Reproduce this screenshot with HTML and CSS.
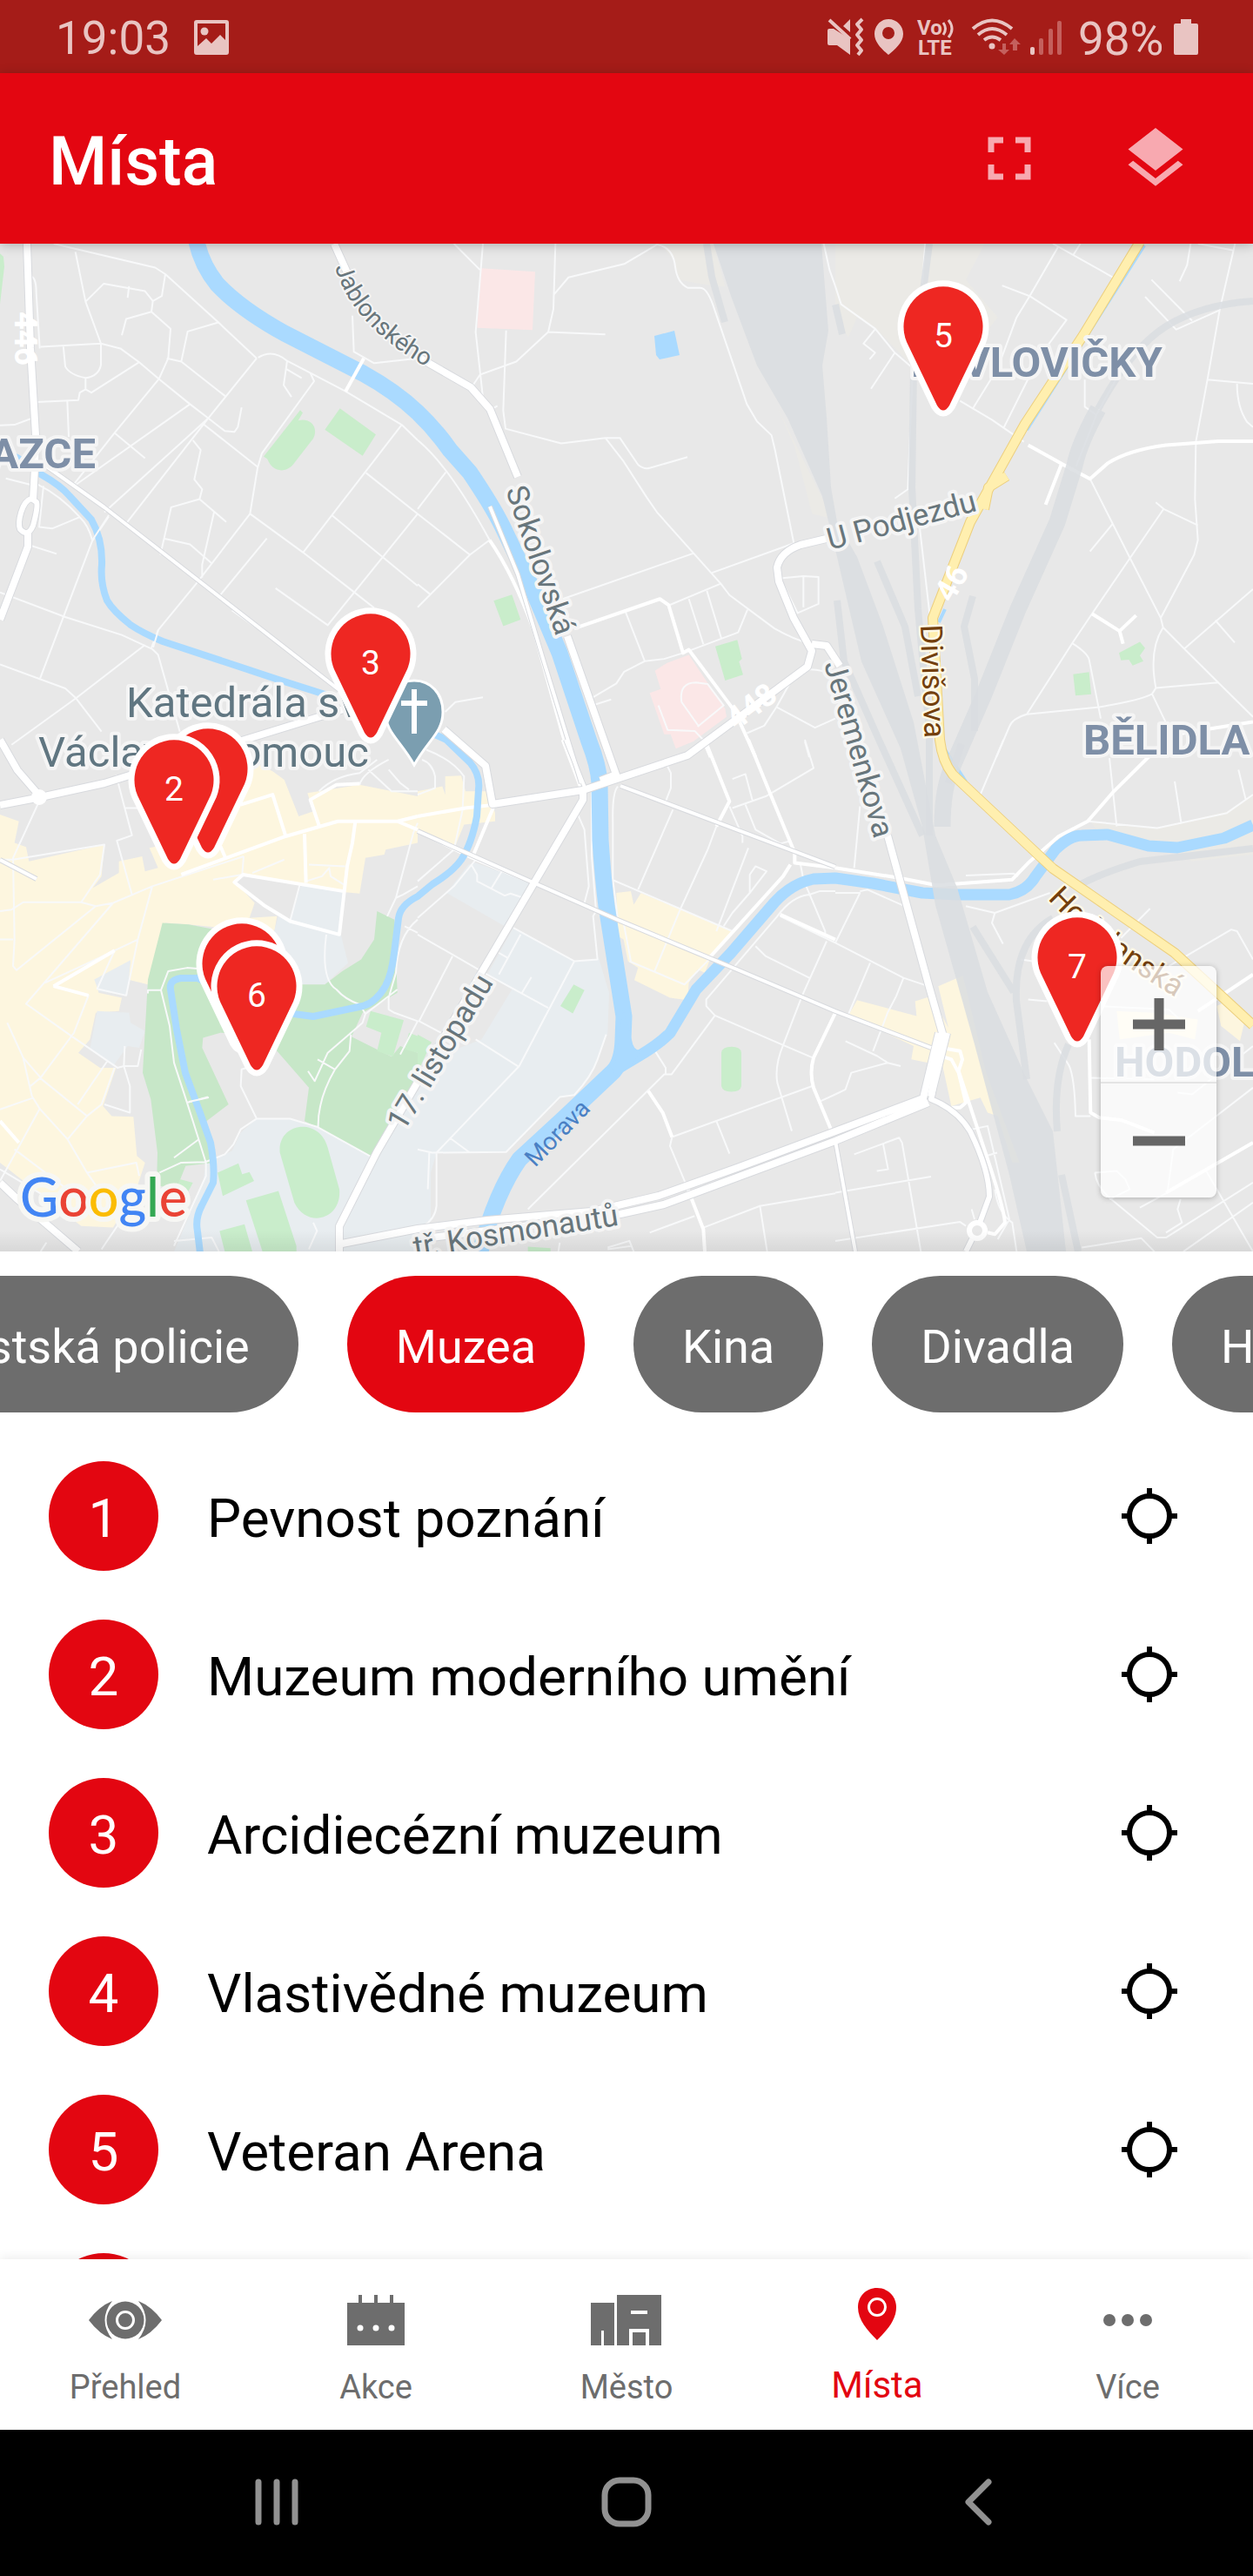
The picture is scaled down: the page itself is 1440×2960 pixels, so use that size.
FILE: index.html
```html
<!DOCTYPE html>
<html lang="cs">
<head>
<meta charset="utf-8">
<meta name="viewport" content="width=device-width, initial-scale=1">
<title>Místa</title>
<link rel="stylesheet" href="styles.css">
</head>
<body>
<div class="status">
  <div class="status-side">
    <span class="status-text">19:03</span>
    <svg class="status-image" viewBox="0 0 42 42" width="42" height="42" fill="currentColor"><path fill-rule="evenodd" d="M4 1H38Q41 1 41 4V38Q41 41 38 41H4Q1 41 1 38V4Q1 1 4 1ZM5 5V31L15 22L21 28L31 18L37 24V5Z"/><circle cx="13" cy="14" r="4.500"/></svg>
  </div>
  <svg class="status-icons" viewBox="946 18 434 50" width="434" height="50" fill="currentColor">
    <path d="M951 35Q951 33 953 33H958L977 45V63L962 52H953Q951 52 951 50ZM969 30L977 22V37Z"/>
    <path d="M953 23L977 45" fill="none" stroke="currentColor" stroke-width="4"/>
    <path d="M991 22L985 28L990 34L985 40L990 46L985 52L990 58L986 63" fill="none" stroke="currentColor" stroke-width="4" stroke-linejoin="round"/>
    <path fill-rule="evenodd" d="M1021 22C1031 22 1038 30 1038 39C1038 49 1028 57 1021 63C1014 57 1005 49 1005 39C1005 30 1012 22 1021 22ZM1021 31A7 7 0 1 0 1021 45A7 7 0 1 0 1021 31Z"/>
    <text class="volte" x="1054" y="40">Vo</text><text class="volte" x="1055" y="63">LTE</text>
    <path d="M1084 26Q1089 33 1084 40M1090 23Q1098 33 1090 43" fill="none" stroke="currentColor" stroke-width="3"/>
    <path d="M1118 33Q1140 14 1163 33M1124 40Q1140 26 1157 40M1131 46Q1140 39 1150 46" fill="none" stroke="currentColor" stroke-width="4"/><circle cx="1140" cy="53" r="3.500"/>
    <path class="dim" d="M1152 50H1156V57H1160L1154 63L1147 57H1152ZM1164 58V51H1160L1166 44L1173 51H1169V58Z"/>
    <rect x="1184" y="54" width="5" height="9" rx="2"/>
    <g class="dim"><rect x="1194" y="44" width="5" height="19" rx="2"/><rect x="1205" y="33" width="5" height="30" rx="2"/><rect x="1215" y="24" width="5" height="39" rx="2"/></g>
    <text class="percent" x="1239" y="63">98%</text>
    <path d="M1357 27V22H1369V27H1375Q1377 27 1377 29V61Q1377 63 1375 63H1351Q1349 63 1349 61V29Q1349 27 1351 27Z"/>
  </svg>
</div>

<header class="appbar">
  <h1>Místa</h1>
  <button class="appbar-btn" aria-label="Celá obrazovka"><svg viewBox="0 0 24 24"><path d="M7 14H5v5h5v-2H7v-3zm-2-4h2V7h3V5H5v5zm12 7h-3v2h5v-5h-2v3zM14 5v2h3v3h2V5h-5z"/></svg></button>
  <button class="appbar-btn" aria-label="Vrstvy"><svg viewBox="0 0 24 24"><path d="M11.990 18.540l-7.370-5.730L3 14.070l9 7 9-7-1.630-1.270-7.380 5.740zM12 16l7.360-5.730L21 9l-9-7-9 7 1.630 1.270L12 16z"/></svg></button>
</header>

<main>
<section class="map" aria-label="Mapa">
<svg class="map-canvas" viewBox="0 280 1440 1158" role="img" aria-label="Mapa Olomouce">
  <defs>
    <g id="main-roads">
      <path class="w6" d="M31 280L35 400L41 500L40 538L38 574M32 612V628L0 712"/>
      <path class="w5" d="M36 573C25 576 20 600 23 608Q32 618 38 604Q44 582 42 577Z"/>
      <path class="w3" d="M48 532L120 583L390 793"/>
      <path class="w7" d="M384 280L402 320M480 410L541 445L563 470L595 548M652 731L708 890L690 897"/>
      <path class="w7" d="M0 925L42 917L120 900L200 875L395 815M0 850L20 885L45 914"/>
      <path class="w7" d="M510 838L558 880L566 924L670 908L790 868L928 766L933 748L912 710L895 668L893 652Q897 634 920 626L958 617"/>
      <path class="w7" d="M933 740L950 742L965 765M1020 960L1067 1131L1083 1187L1070 1260M670 908V919L553 1118L433 1324L390 1409V1438"/>
      <path class="w3" d="M0 988L42 1010M650 850L672 905M713 903L960 996M480 955L617 1016L710 1057L847 1114L960 1162L1070 1204"/>
      <path class="w3" d="M563 582L595 660L625 760L668 900"/>
    </g>
    <g id="avenues">
      <path class="w7" d="M1079 1187L1061 1262L960 1300L847 1342L757 1374L680 1392L560 1402L480 1412L388 1430M480 1424L713 1395L763 1384L960 1311L1067 1267"/>
      <path class="w5" d="M1089 1187L1070 1263Q1100 1275 1115 1300Q1137 1345 1137 1375L1126 1405M1117 1424L1110 1438"/>
      <path class="w7" d="M0 1359L20 1378L90 1438"/>
      <path class="w3" d="M960 1311L983 1438"/>
    </g>
  </defs>
  <rect class="land" y="280" width="1440" height="1158"/>

  <g class="beige">
    <g class="tile-b"><path d="M835 0H1020L1060 130L990 125L900 110L885 50ZM1240 500L1430 840L1360 825L1300 620Z"/></g>
    <g class="tile-c"><path d="M0 0H515L450 110L560 225L510 280L250 360L135 255L75 225L45 285L0 230Z"/></g>
    <g class="tile-f"><path d="M880 245L1110 265L1350 215L1440 165V345L1230 365L1180 335L900 270Z"/></g>
  </g>
  <g class="cream">
    <g class="tile-d"><path d="M0 225L65 245L50 310L90 322L100 365L360 315L350 410L320 445L410 400V365L490 350L500 395L545 385L515 325L600 310L860 60L940 95L980 120L1030 230L1080 215L1060 160L1240 135L1440 170V310L1330 330L1325 345L1260 355L1240 462L1190 458L838 405L808 425L878 490L860 535L955 530L945 580L830 570L650 555L570 550L510 735L440 720L450 665L330 720L340 760L420 775L410 815L330 820L310 900L270 940L345 985L400 985L355 1100L385 1130L460 1132L472 1250L500 1270L470 1350L390 1465L280 1460L0 1270Z"/></g>
    <g class="tile-e"><path d="M0 155L85 140L95 165V110L150 108L165 155H245L267 220V245L160 255L130 318L0 270ZM685 460L735 455L745 495L770 460L1085 575L1010 655L990 700L965 690L935 730L930 782L870 775L747 722L760 685L725 665L710 600L690 590Z"/></g>
    <g class="tile-f"><path d="M75 782L280 830L275 785L330 770L390 865L370 960L345 975L262 960L270 920L45 828ZM355 740L440 708L520 1000L635 1270H610L560 1130L525 1120L500 1075L400 1100L365 960L390 865ZM970 815L1100 820L1250 840L1240 900L1150 880L980 900ZM1315 800L1360 780L1410 850L1395 905L1330 860Z"/></g>
  </g>
  <g class="campus">
    <g class="tile-d"><path d="M1040 432L1185 458L1175 585L1200 670L1120 735H1030L940 590L960 530L1000 545ZM335 815L445 820L450 850L500 875L480 925L440 920L390 980L310 930ZM325 720L450 662L440 768L340 755ZM830 1180L885 1138L1000 1140L1095 1165L1285 1255L1440 1030V1537H600L700 1330L710 1270L800 1235Z"/></g>
    <g class="tile-e"><path d="M0 1060L40 960L220 900L325 750L240 705L330 565L540 665L625 658L660 760L655 880L610 985L540 1068L490 1075L305 1238L65 1240L45 1300V1440L0 1470ZM175 375L200 370L410 435L365 480L300 560L100 460Z"/></g>
  </g>
  <g class="park"><g class="tile-d">
    <path d="M560 550L650 555L740 570L760 880L700 895L697 925L788 1095L712 1145L738 1270L640 1280L610 1345L540 1340L543 1240L520 1080L492 1000L510 720Z"/>
    <path d="M740 570L960 640L1030 735H1120L1180 695L1245 660L1290 600L1300 515L1360 540L1370 760L1250 820L1212 892L1350 952L1380 920L1440 940V1030L1285 1255L1095 1165L1050 1145L1065 1045L950 930L870 885L760 880Z"/>
  </g></g>
  <g class="green">
    <g class="tile-a"><path d="M0 30L12 40L15 70L0 185ZM909 650L1035 508L1044 516L1028 540C1070 530 1100 560 1080 595L1010 675C985 700 940 700 922 658ZM1172 503L1296 583L1250 648L1120 568Z"/></g>
    <g class="tile-b"><path d="M262 1090L325 1072L355 1148L295 1168ZM1026 1230L1102 1210L1118 1268L1108 1276L1122 1316L1060 1334Z"/></g>
    <g class="tile-c"><path d="M978 1250L1050 1216L1068 1235L1050 1258L1062 1275L1025 1288L1012 1270L985 1272ZM820 1315L875 1308L882 1376L828 1380Z"/></g>
    <g class="tile-d"><path d="M1278 815L1392 842L1355 952L1300 935L1315 880L1262 862ZM1410 880L1440 890V940L1395 930ZM750 1300L822 1272L835 1305L860 1298L876 1325L768 1370ZM848 1383L960 1355L1022 1520V1537H905ZM757 1475L843 1455L870 1537H775ZM965 1240C955 1150 1100 1130 1130 1225L1170 1350C1180 1440 1060 1470 1015 1390ZM620 1320L665 1330L650 1355L610 1350Z"/></g>
    <g class="tile-e"><path d="M538 735L575 752L535 822L492 800ZM0 885L48 908L10 980L0 975ZM380 1522L458 1527V1537H380Z"/><path d="M1047 940Q1050 922 1082 922T1116 940V1040Q1113 1057 1082 1057T1047 1040Z"/></g>
  </g>
  <g class="pink"><g class="tile-b"><path d="M219 75L405 86L396 264L205 257ZM818 1304L860 1280L935 1256L1060 1420L1065 1445L950 1520L890 1542L872 1498H850L800 1372L838 1360Z"/></g></g>

  <g class="minor">
    <g class="tile-a">
      <path class="s2" d="M185 0L535 73L570 93L750 238L885 350M570 93L558 160L527 175L522 208L588 260L580 350L548 413M348 305L140 315M527 175L500 145L358 122L295 177L260 25M295 177L348 305V370Q340 405 295 410Q240 400 225 375L218 310M295 410V445L275 455L270 478L125 484M295 445L315 455L480 362M348 305L415 320L480 362L548 413L655 490L718 533L775 572L808 575L820 560L833 500M655 490L255 740M548 413L395 578L250 740M718 533L360 820M885 350L718 533L430 860M890 348Q940 320 990 358L1190 450L1385 553L1440 600"/>
      <path class="s2" d="M1190 450L1255 350M1215 220L1220 330L1290 365L1440 350M1070 395L1083 420L903 640L888 685L862 825L1045 943L1215 1060L1290 1112M700 550L890 683M862 825L675 1040L545 1180L522 1235M755 240L647 268L625 360L575 350M625 360L780 468M990 358L978 432L1005 468M985 382L1040 410M522 208L435 230L420 280M440 165L445 130M395 578L500 655M665 600L692 630L670 720L697 750L688 780L780 850M688 780L590 805L553 950M565 900L655 918L728 975M738 820L697 980V1020M375 833L318 908L138 1328"/>
      <path class="s2" d="M100 100Q125 95 125 150L137 320M130 735Q210 770 275 835Q305 860 318 905M275 835L180 870L135 865L150 740M232 480L237 590M0 555L50 553L105 535M20 717L115 738M100 920L195 947M0 1065L225 1140L420 1195L525 1238L545 1255L620 1490M0 1285L225 1358L262 1388L350 1490M500 1225L262 1388L40 1530M750 1083L920 900M800 1120L880 1170M1385 553L1045 943M1262 700L1440 825L1130 1165L950 1052M1145 830L1440 1045"/>
    </g>
    <g class="tile-b">
      <path class="s2" d="M125 0L215 80M225 0L200 270L225 470M475 0L468 200L450 270L647 277M450 270L340 360L215 400L185 440M470 155L520 103L712 62L825 3Q880 10 888 70Q895 120 932 135H975Q1000 135 1025 205L1135 490L1170 543L1220 585L1232 630L1297 915L1015 1005M305 265L295 510L303 565L495 610L647 593H697L760 675Q780 690 800 685L930 652M647 593L710 665L790 775L825 820L1045 1038L1075 1073L1230 1175Q1300 1210 1350 1220M500 1085L952 945M870 1103L1045 1038M935 1085L985 1223M997 1060L1047 1205M915 1250L1105 1187L1137 1118M717 1125L783 1275L850 1268L915 1250M783 1275L712 1307L685 1343L605 1385M610 1408L667 1392M255 505L275 495M0 600Q110 680 248 905L180 950L0 1110M97 698L0 810M0 825L180 950M0 1040L42 1070M95 1430L130 1400L225 1385"/>
      <path class="s2" d="M970 1475L910 1400Q900 1340 960 1340L1000 1345L1055 1410L965 1475M830 1410L862 1485L955 1488L990 1520M1250 1022L1330 1015L1382 1018V1100L1310 1128L1255 1030M1330 1015V1110M1440 1320Q1370 1290 1320 1305L1297 1320L1237 1415L1370 1478L1440 1450M1237 1415L1195 1472L1135 1495M1335 1520L1350 1568M1400 0L1420 80L1440 130"/>
      <path class="s3" d="M540 1175L835 1085L865 1103L915 1250L935 1240L1095 1430L1165 1568M985 1515L1010 1568M248 905Q330 1010 400 1180L500 1500L525 1568"/>
    </g>
    <g class="tile-c">
      <path class="s2" d="M310 0L300 120M265 420L250 750L205 778M290 860L325 1130M0 130L20 185L138 260L205 333L260 375M138 260L97 305L137 333L118 353M205 333L123 443M430 480L540 538L650 605M750 0L962 105M768 10L670 160L575 128M670 160L797 233L700 350L580 563M670 160L625 225L560 380L473 505M820 35L845 0M1225 0L1213 65L1187 115M1090 110L1230 235M1068 162L1175 262L1325 203L1378 0M1250 0L1370 20M1325 203L1283 415L1440 428M1283 415L1243 605L1240 780L1250 905L1237 950L1122 1143L1016 960L878 718M1385 428Q1385 500 1420 545L1440 560M860 415V498L900 523L970 410M900 523L830 680M878 940L955 857M885 1130L1016 960L1132 810L1250 860M1105 790L1132 810M885 1130L817 1220L660 1437M817 1220Q870 1250 875 1270L915 1450M660 1437L910 1415Q1050 1395 1092 1375L1105 1357L1320 1340M1122 1143L1130 1172Q1080 1240 1105 1357M1130 1172L1203 1237L1320 1340L1440 1445M1203 1237L1440 1055M1310 1150L1377 1218M660 1437Q610 1450 600 1475L555 1568M1092 1375L1160 1500"/>
      <path class="s3" d="M665 615L780 672L878 718L940 670Q1010 630 1140 615L1320 603H1440M780 672L725 797M885 1130L980 1183L1037 1135M980 1183L992 1222M1080 1568L1160 1500L1440 1460"/>
    </g>
    <g class="tile-d">
      <path class="s2" d="M135 185L45 355L50 600L45 680L57 692L330 500L390 490L525 440L840 350M0 360H45L360 315L345 405L325 430L280 488H80L40 510L0 515M400 105L430 205L455 287L403 303L455 465M430 205H475M330 500L280 488M390 490L90 793L235 883L405 985L427 980L430 920M525 440L475 600L435 768L335 748L395 633L185 740L305 768L255 880L140 1015L105 1040M137 1015L300 1130L350 1095L395 985M25 850L80 955L110 1070L137 1108L233 1200L300 1300L340 1350M475 600L305 670L155 730M0 1110L115 1075M137 1108L0 1325M300 1130L233 1200M370 965L268 1095M80 955L140 1015M427 980H475L487 930M427 980L448 1040V1120L360 1095M50 1230L300 1395M0 1290L250 1420M300 1300L470 1270L480 1310M0 600H45M600 1520L710 1310V1270L685 1200L645 1090L600 970L585 860L555 752L580 695L645 685L690 688M510 762V752H555M645 1090L717 1073M600 1255L685 1200M550 1300L625 1270L708 1268L775 1245L805 1215L830 1170L885 1138L830 1040L833 990L870 980M885 1138L1000 1138L1095 1163L1285 1255M1125 585Q1105 720 1160 750Q1190 780 1240 795L1260 823L1370 750M1260 823L1250 850L1130 940L1085 1025L1062 995M1210 885L1205 935L1155 990L1095 960M1155 990Q1095 1080 1097 1163M1340 775V810L1360 820L1440 845L1380 945M1440 540Q1370 590 1365 700L1340 775M1395 560L1440 580M1440 440L1390 465L1365 475L1335 530M1440 250L1425 280L1365 475M1000 545L1033 437M840 350L835 405L735 420M870 400L980 360M1065 375L1190 380M1055 425L1110 410L1135 385L1140 410L1185 435M1100 155Q1150 110 1240 100L1300 60M1240 135Q1250 100 1340 60M1270 90L1350 155H1440M1340 90L1380 130L1410 150M600 1505L730 1495L755 1537M1080 1450L1093 1475L1065 1530M140 1537L160 1510M350 1530L420 1440"/>
      <path class="s3" d="M625 405L985 290L1165 245H1370L1440 230M1370 245L1440 270M985 290L940 165L830 195M1050 283L1055 430M1225 245L1215 310L1197 380L1170 585L1000 545L915 500L808 428L838 405L1185 455M1100 258L1070 180L1160 135L1240 132M760 320L780 360M185 740L305 768M395 633L185 740M0 1145L65 1210"/>
    </g>
    <g class="tile-e">
      <path class="s2" d="M600 150V350L615 515L605 530L620 660L540 665L350 980L65 1240V1400Q60 1440 20 1460M40 1240L35 1350M0 1230L50 1240L305 1238L490 1073L540 1067Q600 1010 620 960L650 885M575 490L590 440L575 270L550 220M330 565L540 665M240 705L450 805M200 900L350 983M0 585L240 705M120 650L5 845L80 880M280 705L355 585M280 640L310 655M360 760L392 713M110 1195L180 1240M0 425L125 330L155 210L160 110Q120 60 30 30M0 535L125 440L205 355M185 375L205 405V425L300 468L320 462L365 475M255 445L290 395M0 165L60 145V110Q50 70 15 60M690 140Q670 160 673 250V420L690 540M675 422L1085 575M735 665L710 550M760 450L880 210M853 65L873 100V145L853 190M1000 330L905 510L817 695M1140 325L1030 575M1030 260L1000 330M1075 200L1120 290V310M1085 205L1200 170L1365 85L1335 0M1130 195L1165 270L1250 312L1280 305M1155 185L1130 103L1085 118M1055 560L1085 520L1145 460V405L1165 380L1203 395L1145 460M730 665L920 735L1010 655"/>
      <path class="s2" d="M1320 375L1330 420L1405 575V590M1240 530Q1290 470 1350 465L1385 455H1440M1240 530L995 780V800L1025 828L875 1005H850L380 1410M815 930L855 985V1005M1025 828L1260 917L1362 955M1165 620L1200 650L1355 717M1410 605L1325 770L1260 917Q1230 980 1240 1030L1290 1175M877 1193L1360 1040M877 1193L870 1220L925 1335M1030 1145L1075 1243M1250 530L1440 610M985 1465L1180 1400L1440 1362M1180 1400L1205 1537M800 1480L955 1430M655 1525L730 1505L745 1537M740 1520L655 1530M490 1510L485 1537M1390 1085L1440 1065"/>
      <path class="s3" d="M795 1055L845 1120L877 1193M925 1335L985 1470L990 1537M1440 820L1365 955Q1350 1000 1365 1045L1425 1170M1440 600L1250 525M190 350L260 205M990 0L1075 185L1030 260M0 230L165 205L265 195M0 275L190 355L410 435M500 0L565 150M1140 0L1210 150L1300 340V370L1440 385M1285 375L1260 410L1000 660"/>
    </g>
    <g class="tile-f">
      <path class="s2" d="M580 0L490 185M85 200L65 385M0 460L85 460L0 610L235 715L320 740M235 715L210 770L180 820L130 935M120 670L45 825M85 455L110 450L240 500M35 905L145 950L180 970L225 980M180 970L55 1000L35 1050L0 1065M450 500L550 520L740 460M550 520L540 550L578 613M450 408L615 402L630 410M880 465L1025 560L985 595M1025 560L1085 507M1150 680L1365 570L1385 575L1440 660M640 660L700 668M665 780L730 785M945 55L970 260M1170 125L1193 253M1390 90L1415 180M870 245L1110 265L1350 220L1440 165M755 910L800 970Q825 1000 828 1130H880M880 1015L1100 1020M910 800L1150 810L1200 850M65 1245L220 1195L230 1210L295 1537M165 1215L182 1290L143 1295M0 1360L330 1312M0 1505L430 1448L450 1460M470 1170L525 1160L600 1440L560 1500M520 1250L558 1240M550 1350Q560 1420 610 1450L625 1537M470 1410L480 1440M850 1525L1055 1497L1100 1537M895 1300Q900 1340 945 1375L1110 1495H1140L1440 1330M895 1300L970 1295L1000 1320L1015 1350L945 1380M1275 1290L1440 1537M1200 1537L1440 1390M1180 1060L1230 1065L1440 920M1190 1380L1180 1410L1195 1450L1140 1480M1440 1045L1165 1230L1145 1360L1050 1405"/>
      <path class="s3" d="M0 385L220 415L350 437L610 420L665 370L770 290L870 245L960 155L1140 0M875 900L880 1120L910 1135L985 1142L1100 1180M365 925L430 935L438 960L425 995L510 1220Q580 1400 585 1450L550 1485L525 1480M365 950L400 960L425 1000L450 1090L430 1105L400 1105M1250 815L1440 705M1140 1360L1440 1210"/>
    </g>
  </g>

  <g class="water">
    <path class="w19" d="M226 278Q232 305 250 327C270 348 300 368 327 383L417 429Q455 450 480 474Q500 493 517 517L540 543Q565 580 577 604L613 679L643 750L677 852Q688 880 689 900L690 965Q693 1010 697 1041L717 1168L716 1195Q715 1220 705 1231L647 1286L597 1332Q570 1370 552 1438"/>
    <path class="w13" d="M705 1231L735 1213Q757 1200 770 1187L800 1137L840 1095L890 1037Q910 1015 935 1010L960 1009L1003 1015L1060 1026L1100 1028H1160Q1180 1024 1190 1007L1213 976Q1230 960 1243 960L1273 959L1320 972L1353 974L1407 963L1440 948"/>
    <path class="w8" d="M0 518L20 526L47 545Q70 558 80 570L105 597Q118 620 117 649Q115 670 123 690Q130 702 150 718Q165 728 187 737L317 780L383 801L480 835L513 850L540 876Q552 890 550 907L548 938Q542 970 530 988Q520 1002 497 1016L480 1030Q460 1040 458 1055L453 1095Q450 1120 443 1133Q432 1152 417 1156L360 1168L300 1160L227 1124H208Q194 1126 196 1137L203 1183L213 1233L230 1279L242 1313Q247 1340 245 1359L232 1385Q224 1400 227 1415L230 1440"/>
    <path class="fillwater" d="M752 386L775 380L781 408L758 413L754 408ZM716 1160L726 1195Q728 1208 737 1207L725 1225L705 1235Z"/>
    <path class="w3" d="M1315 282L1180 494M1086 700L1079 715M1085 860L1110 898"/>
  </g>
  <g class="minor"><path class="s3" d="M397 450L418 412"/><path class="s2" d="M106 621L125 592M182 724L176 744M217 1266L240 1261"/></g>

  <g class="rail">
    <path class="railfill" d="M820 280H944L952 380L945 420L950 480L955 560L962 600L985 640L1015 720L1050 830L1075 960L1100 1020L1135 1140L1180 1240L1210 1300L1225 1438H1180L1160 1350L1120 1200L1075 1040L1060 950L1035 860L990 760L962 640L945 570L905 480L870 420L840 340Z"/>
    <path class="w19" d="M1262 470Q1240 510 1235 535L1215 600L1170 700L1130 800L1095 880Q1083 905 1083 950"/>
    <path class="w8" d="M1440 346Q1380 350 1340 375Q1300 400 1262 470M1068 280L1050 420L1048 560L1055 700L1068 840V960M812 280L818 318L833 370M1440 975L1310 990Q1260 1005 1235 1020M1210 1055Q1165 1080 1168 1150L1180 1240M1118 1065L1165 1140M1215 1300Q1210 1240 1228 1200M1239 1438L1220 1350M960 350L968 384M962 690L970 760L1010 850L1060 960M1008 645L1040 720L1055 800M1118 685L1108 720L1120 780V840M1105 855L1090 900"/>
  </g>

  <use href="#main-roads" class="road-casing"/>
  <use href="#avenues" class="road-casing"/>
  <use href="#main-roads" class="road"/>
  <use href="#avenues" class="road"/>
  <g class="road">
    <circle class="w5" cx="45" cy="916" r="6"/><circle class="w5" cx="1123" cy="1414" r="9"/>
  </g>

  <g class="highway">
    <path class="hw-case" d="M1310 278L1245 385L1178 487L1115 600L1072 710L1080 850Q1083 875 1095 890L1210 998L1350 1095L1440 1178M1157 547L1136 560L1131 585"/>
    <path class="hw" d="M1310 278L1245 385L1178 487L1115 600L1072 710L1080 850Q1083 875 1095 890L1210 998L1350 1095L1440 1178M1157 547L1136 560L1131 585"/>
  </g>

  <g class="road-number">
    <text transform="translate(17 358) rotate(90)">446</text>
    <text transform="translate(846 840) rotate(-37)">448</text>
    <text transform="translate(1094 694) rotate(-60)">46</text>
  </g>
  <g class="street">
    <path id="jablonskeho" fill="none" stroke="none" d="M385 307Q406 378 500 427"/>
    <text class="small halo"><textPath href="#jablonskeho">Jablonského</textPath></text>
    <text class="small face"><textPath href="#jablonskeho" aria-hidden="true"></textPath></text>
    <text transform="translate(581 563) rotate(71)">Sokolovská</text>
    <text transform="translate(954 632) rotate(-15)">U Podjezdu</text>
    <text transform="translate(947 763) rotate(74)">Jeremenkova</text>
    <text transform="translate(464 1301) rotate(-59)">17. listopadu</text>
    <text transform="translate(477 1445) rotate(-9)">tř. Kosmonautů</text>
  </g>
  <g class="street brown">
    <text transform="translate(1058 718) rotate(88)">Divišova</text>
    <path id="hodolanska" fill="none" stroke="none" d="M1204 1033Q1260 1093 1360 1151"/>
    <text><textPath href="#hodolanska">Hodolanská</textPath></text>
  </g>
  <text class="river-name" transform="translate(615 1342) rotate(-46)">Morava</text>
  <g class="district">
    <text x="110" y="538" text-anchor="end">LAZCE</text>
    <text x="1047" y="433">PAVLOVIČKY</text>
    <text x="1245" y="867">BĚLIDLA</text>
    <text x="1281" y="1237">HODOLANY</text>
  </g>
  <g class="poi">
    <text x="145" y="824">Katedrála sv.</text>
    <text x="44" y="881">Václava Olomouc</text>
    <path class="church" d="M476 782C495 782 509 797 509 818C509 842 492 850 476 879C460 850 443 842 443 818C443 797 457 782 476 782Z"/>
    <path class="cross" d="M476 792V843M461 808H491"/>
  </g>

  <defs><path id="pin" class="pin" d="M-42 18A45.500 46 0 1 1 42 18L7 91Q0 102-7 91Z"/></defs>
  <g class="pins">
    <g transform="translate(1084 375)"><use href="#pin"/><text y="24">5</text></g>
    <g transform="translate(426 751)"><use href="#pin"/><text y="24">3</text></g>
    <g transform="translate(239 883)"><use href="#pin"/></g>
    <g transform="translate(200 896)"><use href="#pin"/><text y="24">2</text></g>
    <g transform="translate(278 1107)"><use href="#pin"/></g>
    <g transform="translate(295 1133)"><use href="#pin"/><text y="24">6</text></g>
    <g transform="translate(1238 1100)"><use href="#pin"/><text y="24">7</text></g>
  </g>
  <text class="google" x="23" y="1398"><tspan class="g-blue">G</tspan><tspan class="g-red">o</tspan><tspan class="g-yellow">o</tspan><tspan class="g-blue">g</tspan><tspan class="g-green">l</tspan><tspan class="g-red">e</tspan></text>
</svg>
<div class="zoom">
  <button aria-label="Přiblížit"><svg viewBox="0 0 60 60" width="60" height="60"><path d="M30 0V60M0 30H60"/></svg></button>
  <button aria-label="Oddálit"><svg viewBox="0 0 60 60" width="60" height="60"><path d="M0 30H60"/></svg></button>
</div>
</section>

<div class="chips">
  <button class="chip">Městská policie</button>
  <button class="chip chip-on">Muzea</button>
  <button class="chip">Kina</button>
  <button class="chip">Divadla</button>
  <button class="chip">Hrady</button>
</div>

<ul class="places">
  <li><span class="num">1</span><span class="name">Pevnost poznání</span><button class="locate" aria-label="Zobrazit na mapě"><svg viewBox="0 0 64 64"><circle cx="32" cy="32" r="23"/><path d="M32 0V9M32 55V64M0 32H9M55 32H64"/></svg></button></li>
  <li><span class="num">2</span><span class="name">Muzeum moderního umění</span><button class="locate" aria-label="Zobrazit na mapě"><svg viewBox="0 0 64 64"><circle cx="32" cy="32" r="23"/><path d="M32 0V9M32 55V64M0 32H9M55 32H64"/></svg></button></li>
  <li><span class="num">3</span><span class="name">Arcidiecézní muzeum</span><button class="locate" aria-label="Zobrazit na mapě"><svg viewBox="0 0 64 64"><circle cx="32" cy="32" r="23"/><path d="M32 0V9M32 55V64M0 32H9M55 32H64"/></svg></button></li>
  <li><span class="num">4</span><span class="name">Vlastivědné muzeum</span><button class="locate" aria-label="Zobrazit na mapě"><svg viewBox="0 0 64 64"><circle cx="32" cy="32" r="23"/><path d="M32 0V9M32 55V64M0 32H9M55 32H64"/></svg></button></li>
  <li><span class="num">5</span><span class="name">Veteran Arena</span><button class="locate" aria-label="Zobrazit na mapě"><svg viewBox="0 0 64 64"><circle cx="32" cy="32" r="23"/><path d="M32 0V9M32 55V64M0 32H9M55 32H64"/></svg></button></li>
  <li><span class="num"></span></li>
</ul>
</main>

<nav class="tabs">
  <a href="#prehled"><svg viewBox="0 0 84 70"><path d="M0 41Q12 25 27 19Q10 41 27 63Q12 57 0 41ZM84 41Q72 25 57 19Q74 41 57 63Q72 57 84 41Z"/><circle cx="42" cy="41" r="21.500"/><circle cx="42" cy="41" r="9.500" fill="none" stroke="#fff" stroke-width="3"/></svg>Přehled</a>
  <a href="#akce"><svg viewBox="0 0 84 70"><path d="M9 21H75V70H9ZM22 12H26V22H22ZM40 12H44V22H40ZM58 12H62V22H58Z"/><g fill="#fff"><circle cx="24" cy="50" r="3.500"/><circle cx="42" cy="50" r="3.500"/><circle cx="60" cy="50" r="3.500"/></g></svg>Akce</a>
  <a href="#mesto"><svg viewBox="0 0 84 70"><path d="M1 21H28V70H16V53H13V70H1ZM31 12H82V70H68V51H45V70H31ZM49 55H64V70H49Z"/><path fill="#fff" d="M47 30H66V34H47Z"/></svg>Město</a>
  <a href="#mista" class="tab-on" aria-current="page"><svg viewBox="0 0 84 70"><path d="M42 4C55 4 64 14 64 26C64 41 53 53 42 64C31 53 20 41 20 26C20 14 29 4 42 4Z"/><circle cx="42" cy="26" r="9.500" fill="none" stroke="#fff" stroke-width="3"/></svg>Místa</a>
  <a href="#vice"><svg viewBox="0 0 84 70"><circle cx="21" cy="41" r="7"/><circle cx="42" cy="41" r="7"/><circle cx="63" cy="41" r="7"/></svg>Více</a>
</nav>

<div class="sysnav">
  <button aria-label="Poslední aplikace"><svg viewBox="0 0 60 60"><path d="M9 7V53M30 7V53M51 7V53"/></svg></button>
  <button aria-label="Domů"><svg viewBox="0 0 60 60"><rect x="5" y="5" width="50" height="50" rx="17"/></svg></button>
  <button aria-label="Zpět"><svg viewBox="0 0 60 60"><path d="M44 7L21 30L44 53"/></svg></button>
</div>
</body>
</html>
```
FILE: styles.css
```css
* { box-sizing: border-box; }
body {
  margin: 0;
  height: 100vh;
  display: flex;
  flex-direction: column;
  background: #fff;
  color: #000;
  font-family: Roboto, "Noto Sans", sans-serif;
}
button { border: 0; padding: 0; margin: 0; background: none; font: inherit; color: inherit; display: grid; place-items: center; }
svg { display: block; }

/* status bar */
.status { flex: none; height: 84px; padding: 0 60px 0 64px; display: flex; align-items: center; justify-content: space-between; background: #a51c18; color: #e9c4c2; }
.status-side { display: flex; align-items: center; gap: 26px; }
.status-text { font-size: 53px; line-height: 64px; padding-top: 4px; }
.status-image { margin-top: 2px; }
.status-icons { margin-top: 2px; overflow: visible; }
.status-icons text { font-family: Roboto, sans-serif; }
.volte { font-size: 24px; font-weight: 700; }
.percent { font-size: 53px; }
.dim { fill: #c4605d; }

/* title bar */
.appbar { flex: none; position: relative; z-index: 2; height: 196px; padding: 0 70px 0 56px; display: flex; align-items: center; gap: 84px; background: #e30611; color: #fff; box-shadow: 0 2px 12px rgba(0,0,0,.25); }
.appbar h1 { flex: 1; margin: 0; padding-top: 8px; font-size: 77px; line-height: 90px; font-weight: 500; }
.appbar-btn { width: 84px; height: 84px; color: #f8a9b0; }
.appbar-btn svg { width: 84px; height: 84px; fill: currentColor; }

main { flex: 1; min-height: 0; overflow: hidden; display: flex; flex-direction: column; }

/* map */
.map { flex: none; position: relative; overflow: hidden; }
.map::after { content: ""; position: absolute; inset: auto 0 0; height: 24px; background: linear-gradient(transparent, rgba(0,0,0,.07)); }
.map-canvas { width: 100%; height: auto; }
.tile-a { transform: translate(0, 280px) scale(.33333, .37628); }
.tile-b { transform: translate(480px, 280px) scale(.33333, .37628); }
.tile-c { transform: translate(960px, 280px) scale(.33333, .37628); }
.tile-d { transform: translate(0, 850px) scale(.33333, .38265); }
.tile-e { transform: translate(480px, 850px) scale(.33333, .38265); }
.tile-f { transform: translate(960px, 850px) scale(.33333, .38265); }
.land { fill: #e8e8e8; }
.beige { fill: #ebeae6; }
.cream { fill: #fdf6df; }
.campus { fill: #e8edf0; }
.park { fill: #c7e7c8; }
.green { fill: #c9edcb; }
.pink { fill: #fbe7e7; }
.minor path { fill: none; stroke: #f8f9fa; stroke-linejoin: round; vector-effect: non-scaling-stroke; }
.s2 { stroke-width: 2px; }
.minor .s3 { stroke: #fff; stroke-width: 4px; }
.water path, .rail path, .highway path { fill: none; stroke-linejoin: round; }
.water path { stroke: #aadaff; }
.water .fillwater { fill: #aadaff; stroke: none; }
.rail path { stroke: #d9dde0; opacity: .85; }
.rail .railfill { fill: #d9dde0; stroke: none; }
.w3 { stroke-width: calc(4px + var(--edge, 0px)); }
.w5 { stroke-width: calc(6px + var(--edge, 0px)); }
.w6 { stroke-width: calc(8px + var(--edge, 0px)); }
.w7 { stroke-width: calc(8px + var(--edge, 0px)); }
.w8 { stroke-width: 8px; }
.w13 { stroke-width: 13px; }
.w19 { stroke-width: 19px; }
.road, .road-casing { fill: none; stroke: #fff; stroke-linejoin: round; }
.road-casing { --edge: 2px; stroke: #d8dade; }
.hw-case { stroke: #eccf7f; stroke-width: 12px; }
.hw { stroke: #ffefaf; stroke-width: 10px; }
.map-canvas text { paint-order: stroke; stroke-linejoin: round; font-family: Roboto, sans-serif; }
.street text { font-size: 35px; fill: #68767c; stroke: #f5f5f5; stroke-width: 8px; }
.street .small { font-size: 28px; stroke-width: 4px; }
.brown text { fill: #733f0c; stroke: #fdf8e6; stroke-width: 5px; }
.river-name { font-size: 28px; fill: #4a80c4; }
.road-number text { font-size: 36px; font-weight: 700; fill: #fff; }
.district text { font-size: 49px; font-weight: 700; fill: #7e8fa7; stroke: #f5f5f5; stroke-width: 8px; }
.poi text { font-size: 49px; fill: #607681; stroke: #f5f5f5; stroke-width: 8px; }
.church { fill: #7b9eb0; stroke: #fff; stroke-width: 3px; }
.cross { stroke: #fff; stroke-width: 6px; }
.pin { fill: #ee2722; stroke: #fff; stroke-width: 14px; paint-order: stroke; }
.pins text { font-size: 39px; fill: #fff; text-anchor: middle; }
.map-canvas .google { font-family: Lato, sans-serif; font-size: 61px; font-weight: 500; stroke: #f7f7f4; stroke-width: 12px; }
.g-blue { fill: #4285f4; }
.g-red { fill: #ea4335; }
.g-yellow { fill: #fbbc05; }
.g-green { fill: #34a853; }
.zoom { position: absolute; right: 42px; bottom: 62px; width: 133px; border-radius: 8px; background: rgba(255,255,255,.72); box-shadow: 0 1px 6px rgba(0,0,0,.25); }
.zoom button { width: 100%; height: 133px; }
.zoom button + button { border-top: 2px solid #e4e4e4; }
.zoom path { stroke: #666; stroke-width: 11px; }

/* category chips */
.chips { flex: none; display: flex; gap: 56px; padding: 28px 0; margin-left: -146px; }
.chip { flex: none; height: 157px; padding: 6px 56px 0; border-radius: 79px; background: #6d6d6d; color: #fff; font-size: 54px; white-space: nowrap; }
.chip-on { background: #e30611; }

/* places */
.places { flex: none; list-style: none; margin: 0; padding: 0; }
.places li { display: flex; align-items: center; gap: 56px; padding: 28px 56px; }
.num { flex: none; width: 126px; height: 126px; border-radius: 50%; background: #e30611; color: #fff; display: grid; place-items: center; padding-top: 6px; font-size: 62px; line-height: 72px; }
.name { flex: 1; padding-top: 6px; font-size: 62px; line-height: 72px; }
.locate { width: 126px; height: 126px; }
.locate svg { width: 64px; height: 64px; fill: none; stroke: #000; stroke-width: 6px; }

/* bottom tabs */
.tabs { flex: none; position: relative; height: 196px; display: grid; grid-template-columns: repeat(5, 1fr); background: #fff; box-shadow: 0 -2px 12px rgba(0,0,0,.08); }
.tabs a { display: flex; flex-direction: column; align-items: center; padding-top: 29px; gap: 25px; color: #6d6d6d; font-size: 38px; line-height: 46px; text-decoration: none; }
.tabs svg { width: 84px; height: 70px; fill: currentColor; }
.tabs .tab-on { color: #e30611; font-size: 42px; gap: 23px; }

/* system navigation */
.sysnav { flex: none; height: 168px; padding-bottom: 3px; display: flex; justify-content: center; align-items: center; gap: 342px; background: #000; }
.sysnav svg { width: 60px; height: 60px; fill: none; stroke: #919191; stroke-width: 7px; stroke-linecap: round; stroke-linejoin: round; }
```
